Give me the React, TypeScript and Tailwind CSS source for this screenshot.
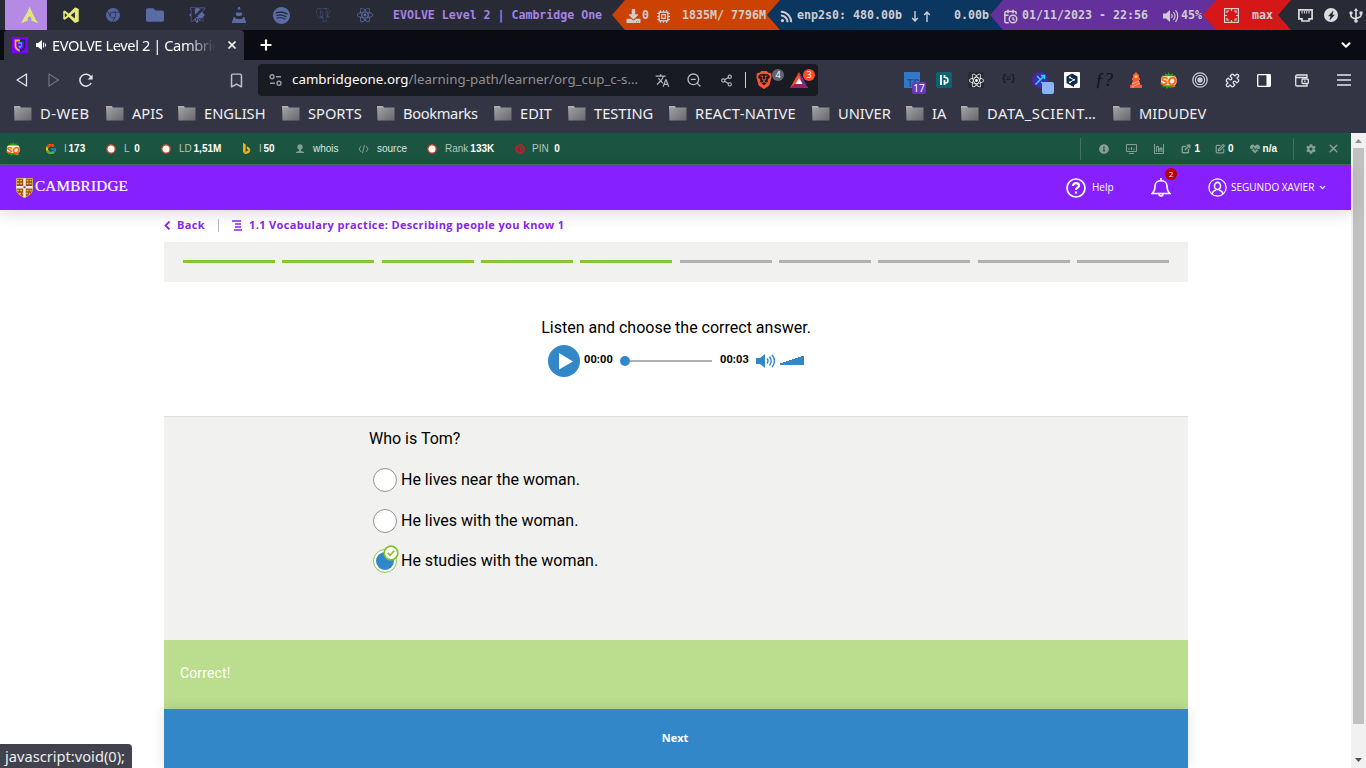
import type { ReactNode } from "react";
import { SiArchlinux, SiSpotify, SiPostgresql, SiReact, SiVim, SiVlcmediaplayer, SiGooglechrome, SiBrave } from "react-icons/si";
import { DiVisualstudio } from "react-icons/di";
import { FaFolder, FaRss, FaDownload, FaInfoCircle, FaCog, FaPinterest, FaHeartbeat } from "react-icons/fa";
import { BsBing, BsFillLightningChargeFill } from "react-icons/bs";
import { FcGoogle } from "react-icons/fc";
import { MdTranslate } from "react-icons/md";
import { Bookmark, ZoomOut, Share2, Puzzle, ChevronDown, X, Plus, CalendarClock, ExternalLink, SquarePen } from "lucide-react";

const mono = "font-['DejaVu_Sans_Mono',monospace] text-[11.63px] font-bold whitespace-pre";
const noto = "font-['Noto_Sans',sans-serif] whitespace-nowrap";

function Cell({ children, className = "" }: { children?: ReactNode; className?: string }) {
  return <div className={"relative flex h-full shrink-0 items-center justify-center " + className}>{children}</div>;
}

const arrow = "-ml-[13px] flex h-full shrink-0 items-center [clip-path:polygon(13px_0,100%_0,100%_100%,13px_100%,0_50%)] text-[#d0cdd0]";

function DesktopBar() {
  return (
    <div className={"flex h-[30px] shrink-0 items-center overflow-hidden bg-[#282a36] pl-[5px] text-[#5a6ba5] " + mono}>
      <Cell className="w-[42px] bg-[#b48ae4] pl-2 text-[#e0e67a]"><SiArchlinux size={18} /></Cell>
      <Cell className="ml-[3px] w-[42px] text-[#e2ea7a]"><DiVisualstudio size={22} /></Cell>
      <Cell className="w-[42px] text-[#5162a0]"><SiGooglechrome size={14} /></Cell>
      <Cell className="w-[42px]"><FaFolder size={18} /></Cell>
      <Cell className="w-[42px]"><SiVim size={16} /></Cell>
      <Cell className="w-[42px]"><SiVlcmediaplayer size={16} /></Cell>
      <Cell className="w-[42px]"><SiSpotify size={17} /></Cell>
      <Cell className="w-[42px] text-[#465689]"><SiPostgresql size={14} /></Cell>
      <Cell className="w-[42px]"><SiReact size={16} /></Cell>
      <div className="ml-[7px] w-[232px] shrink-0 pt-[2px] tracking-[-0.03px] text-[#a584e6]">EVOLVE Level 2 | Cambridge One</div>
      <div className={arrow + " w-[168px] bg-[#cc4203] pt-[2px] pl-[13px]"}>
        <FaDownload size={14} className="w-[17px]" />
        <span className="w-[15px]">0</span>
        <svg width="13" height="13" viewBox="0 0 13 13" fill="none" stroke="currentColor" className="mr-[12px]"><rect x="2.200" y="2.200" width="8.600" height="8.600" strokeWidth="1.400" /><rect x="4.700" y="4.700" width="3.600" height="3.600" strokeWidth="1.200" /><path d="M3.500 0v2M6.500 0v2M9.500 0v2M3.500 11v2M6.500 11v2M9.500 11v2M0 3.500h2M0 6.500h2M0 9.500h2M11 3.500h2M11 6.500h2M11 9.500h2" strokeWidth="1.100" /></svg>
        <span>1835M/ 7796M</span>
      </div>
      <div className={arrow + " w-[236px] bg-[#0b3660] pt-[2px] pl-[13px]"}>
        <FaRss size={13} className="mr-[4px]" />
        <span className="w-[105px]">enp2s0: 480.00b</span>
        <svg width="20" height="11" viewBox="0 0 20 11" fill="none" stroke="currentColor" strokeWidth="1.400" className="mr-[23px] ml-[9px]"><path d="M4 0v10M1.200 7L4 10l2.800-3M16 11V1M13.200 4L16 1l2.800 3" /></svg>
        <span>0.00b</span>
      </div>
      <div className={arrow + " w-[226px] bg-[#63309c] pt-[2px] pl-[13px]"}>
        <CalendarClock size={15} strokeWidth={2.400} className="mr-[4px]" />
        <span className="w-[141px]">01/11/2023 - 22:56</span>
        <svg width="16" height="14" viewBox="0 0 16 14" fill="none" stroke="currentColor" strokeWidth="1.200" className="mr-[2px]"><path d="M0 4.500h3L7 1v12L3 9.500H0z" fill="currentColor" stroke="none" /><path d="M8.500 5q1.500 2 0 4M10.500 3q3 4 0 8M12.500 1.200q4.500 5.800 0 11.600" /></svg>
        <span>45%</span>
      </div>
      <div className={arrow + " w-[88px] bg-[#d51719] pl-[21px]"}>
        <svg width="15" height="15" viewBox="0 0 15 15" fill="none" stroke="currentColor" strokeWidth="1.200">
          <rect x=".6" y=".6" width="13.8" height="13.8" />
          <path d="M3 5V3h2M10 3h2v2M12 10v2h-2M5 12H3v-2M7.5 1v2M7.5 12v2M1 7.5h2M12 7.5h2" />
        </svg>
        <span className="ml-[13px] pt-[2px]">max</span>
      </div>
      <div className={arrow + " w-[88px] bg-[#282a36] pl-[20px] !text-[#dcdcdc]"}>
        <svg width="15" height="13" viewBox="0 0 15 13" fill="none" stroke="currentColor" strokeWidth="1.700">
          <path d="M.9.9h13.2v9H11V12H4V9.900H.9z" /><path d="M4 2v2.500M6.400 2v2.500M8.700 2v2.500M11 2v2.500" strokeWidth="1" />
        </svg>
        <div className="ml-[11px] flex size-[14px] items-center justify-center rounded-full bg-[#dcdcdc] text-[#282a36]"><BsFillLightningChargeFill size={9} /></div>
        <svg width="14" height="15" viewBox="0 0 14 15" fill="none" stroke="currentColor" strokeWidth="1.600" className="ml-[11px]"><path d="M7 2v11M2 5v3q0 1.500 5 3M12 5v2.500q0 1.500-5 3" /><path d="M4.800 3L7 0l2.200 3z" fill="currentColor" stroke="none" /><circle cx="7" cy="13" r="1.800" fill="currentColor" stroke="none" /><circle cx="2" cy="5" r="1.700" fill="currentColor" stroke="none" /><path d="M10.500 3.500h3v3h-3z" fill="currentColor" stroke="none" /></svg>
      </div>
    </div>
  );
}

function TabStrip() {
  return (
    <div className="flex h-[30px] shrink-0 items-center bg-[#0b0b14] pl-1 text-white">
      <div className="flex h-full w-[240px] shrink-0 items-center rounded-t-[4px] bg-[#333545] pl-2">
        <div className="flex size-4 items-center justify-center bg-[#8000ff]">
          <svg width="12" height="13" viewBox="0 0 12 13" fill="none" strokeWidth="1.800">
            <path d="M6 1.500H1.500V7c0 3 2.500 4 4.500 5" stroke="#f4b12e" /><path d="M6 1.500h4.500V7c0 3-2.500 4-4.500 5" stroke="#142b5c" /><path d="M4 4h3.500v3L6 8.500 4.500 7" stroke="#2bb8d8" strokeWidth="1.300" />
          </svg>
        </div>
        <svg width="12" height="12" viewBox="0 0 12 12" className="ml-[7px]">
          <path d="M1 4h2l4-3v10L3 8H1z" fill="white" /><path d="M8.600 3.500v5M10.400 4.500v3" stroke="white" strokeWidth="1" />
        </svg>
        <div className={noto + " ml-[5px] w-[163px] shrink-0 overflow-hidden text-[14.67px] tracking-[-0.42px] [mask-image:linear-gradient(to_right,black_82%,transparent)]"}>EVOLVE Level 2 | Cambridge One</div>
        <X size={12} strokeWidth={3.500} className="ml-[11px] shrink-0" />
      </div>
      <Plus size={16} strokeWidth={3.200} className="ml-[14px]" />
      <ChevronDown size={14} strokeWidth={3.500} className="mr-[13px] ml-auto" />
    </div>
  );
}

function Seo({ size }: { size: number }) {
  return (
    <svg width={size} height={size} viewBox="0 0 16 16">
      <path d="M8 0l1.500 2.500L12 1l0 2.500 3-.5-1.500 3v5l1 3-3-1-1 2.500L8 14l-2 2-1-2.500-3 1 1-3V6L1.500 3l3 .5L4.500 1 7 2.500z" fill="#3f9a18" />
      <rect x="1" y="4" width="14.500" height="8.500" rx="3" fill="#fff4e6" />
      <text x="8" y="12" textAnchor="middle" fontFamily="Liberation Sans" fontSize="10.500" fontWeight="bold" fontStyle="italic" fill="#f06a0c" stroke="#f06a0c" strokeWidth=".4">SQ</text>
    </svg>
  );
}

function NavRow() {
  return (
    <div className="flex h-10 shrink-0 items-center bg-[#333545] pl-[6px] text-[#e3e4e8]">
      <Cell className="w-8"><svg width="14" height="16" viewBox="0 0 14 16" fill="none" stroke="currentColor" strokeWidth="1.300" strokeLinejoin="round"><path d="M11.500 2v12L2 8z" /></svg></Cell>
      <Cell className="w-8 text-[#6f7180]"><svg width="14" height="16" viewBox="0 0 14 16" fill="none" stroke="currentColor" strokeWidth="1.300" strokeLinejoin="round"><path d="M2 2v12l9.500-6z" /></svg></Cell>
      <Cell className="w-8"><svg width="16" height="16" viewBox="0 0 16 16" fill="none" stroke="currentColor" strokeWidth="1.500"><path d="M13.200 11A6 6 0 1 1 13 5" /><path d="M14.600 2.500v5h-5z" fill="currentColor" stroke="none" /></svg></Cell>
      <Cell className="ml-[118px] w-8 text-[#c0c1c8]"><Bookmark size={17} strokeWidth={2.100} /></Cell>
      <div className={"ml-[6px] flex h-8 w-[560px] shrink-0 items-center rounded-[4px] bg-[#191b22] text-[#b6b7bc] " + noto}>
        <Cell className="w-[34px]"><svg width="13" height="12" viewBox="0 0 13 12" fill="none" stroke="#9a9ba2" strokeWidth="1.400"><circle cx="3" cy="2.800" r="2" /><path d="M7 2.800h5M1 9.200h5" /><circle cx="10" cy="9.200" r="2" /></svg></Cell>
        <div className="w-[354px] shrink-0 text-[13.33px] tracking-[0.01px] text-[#8e9097]"><span className="text-white">cambridgeone.org</span>/learning-path/learner/org_cup_c-s…</div>
        <Cell className="w-8"><MdTranslate size={15} /></Cell>
        <Cell className="w-8"><ZoomOut size={16} /></Cell>
        <Cell className="w-8"><Share2 size={13} /></Cell>
        <div className="mx-[3px] h-4 w-px bg-[#d0d0d4]" />
        <Cell className="w-[34px]">
          <SiBrave size={18} color="#fb542b" className="-ml-1" />
          <span className="absolute top-[5px] right-[-1px] flex size-3 items-center justify-center rounded-full bg-[#62646f] text-[9px] text-white">4</span>
        </Cell>
        <Cell className="ml-[1px] w-[34px]">
          <svg width="18" height="16" viewBox="0 0 18 16" className="-ml-1"><path d="M9 0l9 16H0z" fill="#ff4724" /><path d="M0 16h18l-6-5H6z" fill="#9e1f63" /><path d="M9 0l9 16-6-4z" fill="#662d91" /><path d="M9 6l3.600 6H5.400z" fill="white" /></svg>
          <span className="absolute top-[5px] right-[3px] flex size-3 items-center justify-center rounded-full bg-[#ff4b26] text-[9px] text-white">3</span>
        </Cell>
      </div>
      <div className="ml-[78px] flex h-full">
        <Cell className="w-8">
          <div className="flex size-4 items-end justify-end bg-[#3178c6] font-['Liberation_Sans',sans-serif] text-[10px] leading-[9px] font-bold text-[#234f85]">TS</div>
          <span className={"absolute top-[22px] left-[16px] flex h-3 w-[14px] items-center justify-center rounded-[2px] bg-[#673ab7] text-[10px] text-white " + noto}>17</span>
        </Cell>
        <Cell className="w-8"><svg width="16" height="16" viewBox="0 0 16 16"><rect width="16" height="16" rx="2" fill="#0d6470" /><path d="M5 3v10M8.500 3v3M8.500 8v5" stroke="white" strokeWidth="1.800" /><path d="M9 5.500c4 0 4 5.500 0 5.500" fill="none" stroke="white" strokeWidth="1.500" /></svg></Cell>
        <Cell className="w-8"><div className="flex size-4 items-center justify-center bg-[#292b36]"><SiReact size={15} color="white" /></div></Cell>
        <Cell className="w-8 font-['Liberation_Mono',monospace] text-[9px] font-bold tracking-[-1px] text-[#15161c]">{"{≡}"}</Cell>
        <Cell className="w-8">
          <svg width="16" height="16" viewBox="0 0 16 16"><circle cx="8" cy="8" r="8" fill="#4527b0" /><path d="M3.500 12.500l9-9M5 4l3 3M9 10l3 2M9 3.500h3.500V7" stroke="#25d9ef" strokeWidth="1.600" fill="none" /></svg>
          <span className="absolute top-[22px] left-[18px] h-3 w-3 rounded-[2px] bg-[#8ab4f8]" />
        </Cell>
        <Cell className="w-8"><svg width="16" height="16" viewBox="0 0 16 16"><rect width="16" height="16" fill="white" rx="1" /><path d="M8 1.500l5.500 3v6.500L10 13v2l-2-1-5.500-3V4.500z" fill="#0f2b46" /><path d="M6 5.500l4 2.300-4 2.500" stroke="white" fill="none" /><circle cx="6" cy="5.500" r="1" fill="white" /><circle cx="10" cy="7.800" r="1" fill="white" /><circle cx="6" cy="10.300" r="1" fill="white" /></svg></Cell>
        <Cell className="w-8 font-['Liberation_Serif',serif] text-[18px] text-[#101116] italic">ƒ?</Cell>
        <Cell className="w-8"><svg width="12" height="16" viewBox="0 0 12 16"><path d="M3 3l3-3 3 3v3h1v2H2V6h1zM3 8h6l1.500 5H12v3H0v-3h1.500z" fill="#ff5a36" /><path d="M2 12l7-3M2 15l8-4" stroke="#ffb19e" /><circle cx="6" cy="4.500" r="1.500" fill="#ffd83b" /></svg></Cell>
        <Cell className="w-8"><Seo size={17} /></Cell>
        <Cell className="w-8"><svg width="16" height="16" viewBox="0 0 16 16" fill="none" stroke="#c9cad0" strokeWidth="1.300"><circle cx="8" cy="8" r="7.200" /><circle cx="8" cy="8" r="4.600" /><circle cx="8" cy="8" r="2" fill="#c9cad0" /></svg></Cell>
        <Cell className="w-8"><Puzzle size={15} /></Cell>
        <Cell className="w-8"><svg width="14" height="13" viewBox="0 0 14 13" fill="none"><rect x=".7" y=".7" width="12.600" height="11.600" rx=".5" stroke="white" strokeWidth="1.300" /><path d="M9.500 1h4v11h-4z" fill="white" /></svg></Cell>
        <Cell className="ml-[6px] w-8"><svg width="14" height="13" viewBox="0 0 14 13" fill="none" stroke="currentColor" strokeWidth="1.300"><path d="M12 4V1H2Q.7 1 .7 2.500V11Q.7 12 2 12H12V10M1 3.500h11" /><rect x="7" y="5" width="6.300" height="4.500" rx="1" /><path d="M9 7.200h1.500" /></svg></Cell>
        <Cell className="ml-[10px] w-8"><svg width="14" height="12" viewBox="0 0 14 12" stroke="currentColor" strokeWidth="1.300"><path d="M0 1h14M0 6h14M0 11h14" /></svg></Cell>
      </div>
    </div>
  );
}

function Mark({ label, w }: { label: string; w: string }) {
  return (
    <div className={"flex shrink-0 items-center " + w}>
      <svg width="18" height="15" viewBox="0 0 18 15" className="mr-[8px] shrink-0">
        <defs><linearGradient id="folder" x2="1" y2="1"><stop stopColor="#a5a5a8" /><stop offset="1" stopColor="#68686c" /></linearGradient></defs>
        <path d="M0 0h6l1 1.500h10.500V14.500H.5z" fill="url(#folder)" /><path d="M0 .8h6" stroke="#b8b0ae" strokeWidth="1.500" />
      </svg>
      {label}
    </div>
  );
}

function Bookmarks() {
  return (
    <div className={"flex h-[33px] shrink-0 items-center bg-[#333545] pb-[7px] pl-[14px] text-[14.67px] text-[#f0f0f2] " + noto}>
      <Mark label="D-WEB" w="w-[92px] tracking-[0.6px]" />
      <Mark label="APIS" w="w-[72px]" />
      <Mark label="ENGLISH" w="w-[104px]" />
      <Mark label="SPORTS" w="w-[95px]" />
      <Mark label="Bookmarks" w="w-[117px] tracking-[-0.35px]" />
      <Mark label="EDIT" w="w-[74px]" />
      <Mark label="TESTING" w="w-[101px]" />
      <Mark label="REACT-NATIVE" w="w-[143px] tracking-[0.3px]" />
      <Mark label="UNIVER" w="w-[94px]" />
      <Mark label="IA" w="w-[55px]" />
      <Mark label="DATA_SCIENT…" w="w-[152px] tracking-[0.6px]" />
      <Mark label="MIDUDEV" w="w-[100px]" />
    </div>
  );
}

function Majestic() {
  return <svg width="10" height="10" viewBox="0 0 10 10"><circle cx="5" cy="5" r="4.200" fill="white" stroke="#c6462d" strokeWidth="1.300" /></svg>;
}

function SeoBar() {
  return (
    <div className="flex h-8 shrink-0 items-center border-b border-[#41715f] bg-[#1b5440] pl-1.5 font-['Liberation_Sans',sans-serif] text-[10px] whitespace-nowrap text-[#b4c7bf] [&_b]:text-white">
      <div className="w-[39px]"><Seo size={14} /></div>
      <div className="w-[19px]"><FcGoogle size={12} /></div>
      <div className="w-[42px]">I <b className="-ml-[1px]">173</b></div>
      <div className="w-[18px]"><Majestic /></div>
      <div className="w-[37px]">L&nbsp; <b className="-ml-[1px]">0</b></div>
      <div className="w-[18px]"><Majestic /></div>
      <div className="w-[62px]">LD <b className="-ml-[1px]">1,51M</b></div>
      <div className="w-[18px]"><BsBing size={11} color="#f8b51c" /></div>
      <div className="w-[36px]">I <b className="-ml-[1px]">50</b></div>
      <svg width="10" height="10" viewBox="0 0 10 10" className="mr-[8px]" fill="#839e94"><circle cx="5" cy="3" r="2.700" /><path d="M4 5h2v2l3 1v1H1V8l3-1z" /></svg>
      <div className="w-[45px] text-[#dce6e2]">whois</div>
      <svg width="11" height="8" viewBox="0 0 11 8" className="mr-[8px]" fill="none" stroke="#839e94"><path d="M3 1L1 4l2 3M8 1l2 3-2 3M6.500 0l-2 8" /></svg>
      <div className="w-[50px] text-[#dce6e2]">source</div>
      <div className="w-[18px]"><Majestic /></div>
      <div className="w-[70px]">Rank<b className="ml-[2px]">133K</b></div>
      <div className="w-[17px]"><FaPinterest size={10} color="#c3202d" /></div>
      <div>PIN&nbsp; <b>0</b></div>
      <div className="ml-auto flex h-full items-center text-[#84a096]">
        <div className="h-[22px] w-px bg-[#48705f]" />
        <FaInfoCircle size={10} className="ml-[18px]" />
        <svg width="11" height="10" viewBox="0 0 11 10" fill="none" stroke="currentColor" className="ml-[17px]"><path d="M.5.500h10v7H.5zM3 9.500h5M3 6V4M5.500 6V3M8 6V4.500" /></svg>
        <svg width="10" height="10" viewBox="0 0 10 10" fill="none" stroke="currentColor" className="ml-[17px]"><path d="M.5 0v9.500h9V0M2.500 8V2.500h2V8M6 8V4h2v4M5 5h3" /></svg>
        <ExternalLink size={10} strokeWidth={3.500} className="ml-[17px]" /><b className="ml-[3px]">1</b>
        <SquarePen size={10} strokeWidth={3} className="ml-[15px]" /><b className="ml-[3px]">0</b>
        <FaHeartbeat size={10} className="ml-[16px]" /><b className="ml-[3px]">n/a</b>
        <div className="ml-[16px] h-[22px] w-px bg-[#48705f]" />
        <FaCog size={10} className="ml-[12px]" />
        <X size={13} strokeWidth={3} className="mr-[11px] ml-[11px]" />
      </div>
    </div>
  );
}

function Crest() {
  return (
    <svg width="17" height="20" viewBox="0 0 17 20">
      <path d="M0 0h17v11c0 5-4 7-8.500 9C4 18 0 16 0 11z" fill="#a8481c" />
      <path d="M1 2.500h6M10.500 2.500H16M1 5.500h6M10.500 5.500H16M1 12.500h6M10.500 12.500H16M3 15.500h4M10 15.500h4" stroke="#e3b63a" strokeWidth="1.600" strokeDasharray="2 1" />
      <path d="M8.500 0v19.500M0 9.200h17" stroke="#f3ecf3" strokeWidth="2.600" /><path d="M7.500 8.200h2v2h-2z" fill="#b03340" />
      <path d="M.5.500h16v10.500c0 5-4 6.500-8 8.400C4.500 17.500.5 16 .5 11z" fill="none" stroke="#d8c9a8" strokeWidth=".7" />
    </svg>
  );
}

function Header() {
  return (
    <header className="z-10 flex h-[45px] shrink-0 items-center bg-[#8720ff] pl-4 font-['Open_Sans',sans-serif] text-[10px] font-medium whitespace-nowrap text-white shadow-[0_4px_16px_rgba(0,0,0,0.14)]">
      <Crest />
      <div className="ml-[2px] pb-[2px] font-['Liberation_Serif',serif] text-[15.2px] font-normal tracking-[0.22px] [-webkit-text-stroke:0.2px_white]">CAMBRIDGE</div>
      <svg width="20" height="20" viewBox="0 0 20 20" fill="none" stroke="white" strokeWidth="1.700" className="ml-auto"><circle cx="10" cy="10" r="9" /><path d="M7 8c0-4 6-3.500 6-.3 0 2-3 2-3 4.300" strokeWidth="2.200" /><path d="M10 13.500v2" strokeWidth="2.200" /></svg>
      <span className="ml-[6px] w-[59px]">Help</span>
      <div className="relative w-[57px]">
        <svg width="20" height="19" viewBox="0 0 20 19" fill="none" stroke="white" strokeWidth="1.600"><path d="M1 15.500C4 13 4 11 4 8c0-7 12-7 12 0 0 3 0 5 3 7.500zM8 16c0 2.500 4 2.500 4 0" /><path d="M10 0v2.500" /></svg>
        <span className="absolute top-[-10px] left-[14px] flex size-3 items-center justify-center rounded-full bg-[#b80000] text-[8px]">2</span>
      </div>
      <svg width="19" height="19" viewBox="0 0 19 19" fill="none" stroke="white" strokeWidth="1.200"><circle cx="9.500" cy="9.500" r="8.600" /><ellipse cx="9.500" cy="8" rx="3" ry="3.600" strokeWidth="1.600" /><path d="M4 16c.5-3 2-3.500 4-4M15 16c-.5-3-2-3.500-4-4" strokeWidth="1.500" /></svg>
      <span className="ml-[4px] w-[87px]">SEGUNDO XAVIER</span>
      <ChevronDown size={9} strokeWidth={3.500} className="mr-[24px] shrink-0" />
    </header>
  );
}

function Player() {
  return (
    <div className="mt-[4px] ml-[384px] flex h-[34px] items-center font-['Roboto',sans-serif] text-[11px] font-bold text-black">
      <svg width="32" height="32" viewBox="0 0 32 32"><circle cx="16" cy="16" r="16" fill="#3287c8" /><path d="M11 8l14 8.500-14 8z" fill="white" /></svg>
      <span className="ml-[4px] w-[36px] pb-[2px] tracking-[0.1px]">00:00</span>
      <span className="size-[10px] rounded-full bg-[#3287c8]" />
      <span className="h-[2px] w-[82px] bg-[#b0b0b0]" />
      <span className="ml-[8px] w-[36px] pb-[2px] tracking-[0.1px]">00:03</span>
      <svg width="20" height="14" viewBox="0 0 20 14" fill="none" stroke="#3287c8" strokeWidth="1.400"><path d="M0 4h4l5-4v14l-5-4H0z" fill="#3287c8" stroke="none" /><path d="M11 4.500q2 2.500 0 5M13.500 2.500q3.500 4.500 0 9M16 .8q5 6.200 0 12.400" /></svg>
      <svg width="24" height="10" viewBox="0 0 24 10" className="mb-[2px] ml-[4px]"><path d="M0 8h3V7h3V6h3V5h3V4h3V3h3V2h3V1h3v9H0z" fill="#3287c8" /></svg>
    </div>
  );
}

function Option({ text, checked = false }: { text: string; checked?: boolean }) {
  return (
    <label className="flex h-[40.500px] items-center">
      <span className={"relative mr-[4px] flex size-6 items-center justify-center rounded-full border bg-white " + (checked ? "border-[#8cc63f]" : "border-[#929292]")}>
        {checked && <span className="size-[18px] rounded-full bg-[#3287c8]" />}
        {checked && (
          <svg width="16" height="16" viewBox="0 0 16 16" className="absolute top-[-5px] left-[9px]" fill="white" stroke="#84c225" strokeWidth="1.700"><circle cx="8" cy="8" r="6.800" /><path d="M4.800 8l2.400 2.200 4-4.400" fill="none" /></svg>
        )}
      </span>
      {text}
    </label>
  );
}

function Lesson() {
  return (
    <main className="ml-[164px] flex min-h-0 w-[1024px] flex-1 flex-col font-['Roboto',sans-serif] text-[16px] text-black">
      <div className="z-20 flex h-8 shrink-0 items-center pb-[2px] font-['Open_Sans',sans-serif] text-[11px] font-bold whitespace-nowrap text-[#8427e8]">
        <svg width="7" height="9" viewBox="0 0 7 9" fill="none" stroke="currentColor" strokeWidth="1.800"><path d="M5.500.5l-4 4 4 4" /></svg>
        <span className="ml-[6px] w-[41px] tracking-[0.360px]">Back</span>
        <span className="h-[13px] w-px bg-[#b5b5b5]" />
        <svg width="10" height="11" viewBox="0 0 10 11" stroke="currentColor" strokeWidth="1.500" className="ml-[13px]"><path d="M0 1h9M3 4h6M3 7h6M2 10h8" /></svg>
        <span className="ml-[7px] tracking-[0.350px]">1.1 Vocabulary practice: Describing people you know 1</span>
      </div>
      <div className="flex h-10 shrink-0 gap-[7.350px] bg-[#f1f1ef] px-[19px] pt-[18px]">
        {[1, 2, 3, 4, 5, 6, 7, 8, 9, 10].map((n) => <span key={n} className={"h-[3px] flex-1 " + (n < 6 ? "bg-[#84c733]" : "bg-[#b1b1b1]")} />)}
      </div>
      <div className="h-[134px] shrink-0 pt-[34px]">
        <div className="text-center leading-[24px]">Listen and choose the correct answer.</div>
        <Player />
      </div>
      <div className="h-[224px] shrink-0 border-t border-[#dededc] bg-[#f1f1ef] pt-[10px] pl-[205px]">
        <div className="mb-[9px] leading-[24px]">Who is Tom?</div>
        <div className="pl-[4px]">
          <Option text="He lives near the woman." />
          <Option text="He lives with the woman." />
          <Option text="He studies with the woman." checked />
        </div>
      </div>
      <div className="flex h-[69px] shrink-0 items-center bg-[#badd8e] pb-[3px] pl-4 text-[14px] tracking-[0.12px] text-white">Correct!</div>
      <button className="h-[59px] shrink-0 bg-[#3287c8] pr-[2px] font-['Open_Sans',sans-serif] text-[11px] font-bold text-white shadow-[0_0_12px_rgba(0,0,0,0.12)]">Next</button>
    </main>
  );
}

function Scrollbar() {
  return (
    <div className="flex w-[15px] shrink-0 flex-col items-center justify-between bg-[#f1f1f1] py-[5px]">
      <svg width="7" height="5" viewBox="0 0 7 5"><path d="M0 5l3.500-4L7 5z" fill="#909090" /></svg>
      <div className="mt-[5px] mb-auto h-[576px] w-[11px] bg-[#c1c1c1]" />
      <svg width="7" height="5" viewBox="0 0 7 5"><path d="M0 0l3.500 4L7 0z" fill="#505050" /></svg>
    </div>
  );
}

export default function App() {
  return (
    <div className="relative flex h-[768px] w-[1366px] flex-col overflow-hidden bg-white">
      <DesktopBar />
      <TabStrip />
      <NavRow />
      <Bookmarks />
      <div className="flex min-h-0 flex-1">
        <div className="flex w-[1351px] flex-col">
          <SeoBar />
          <Header />
          <Lesson />
        </div>
        <Scrollbar />
      </div>
      <div className={"absolute bottom-0 left-0 z-30 flex h-[24px] w-[132px] items-center rounded-tr-[4px] bg-[#41424d] pl-[5px] text-[14.670px] text-[#eeeeef] " + noto}>javascript:void(0);</div>
    </div>
  );
}
